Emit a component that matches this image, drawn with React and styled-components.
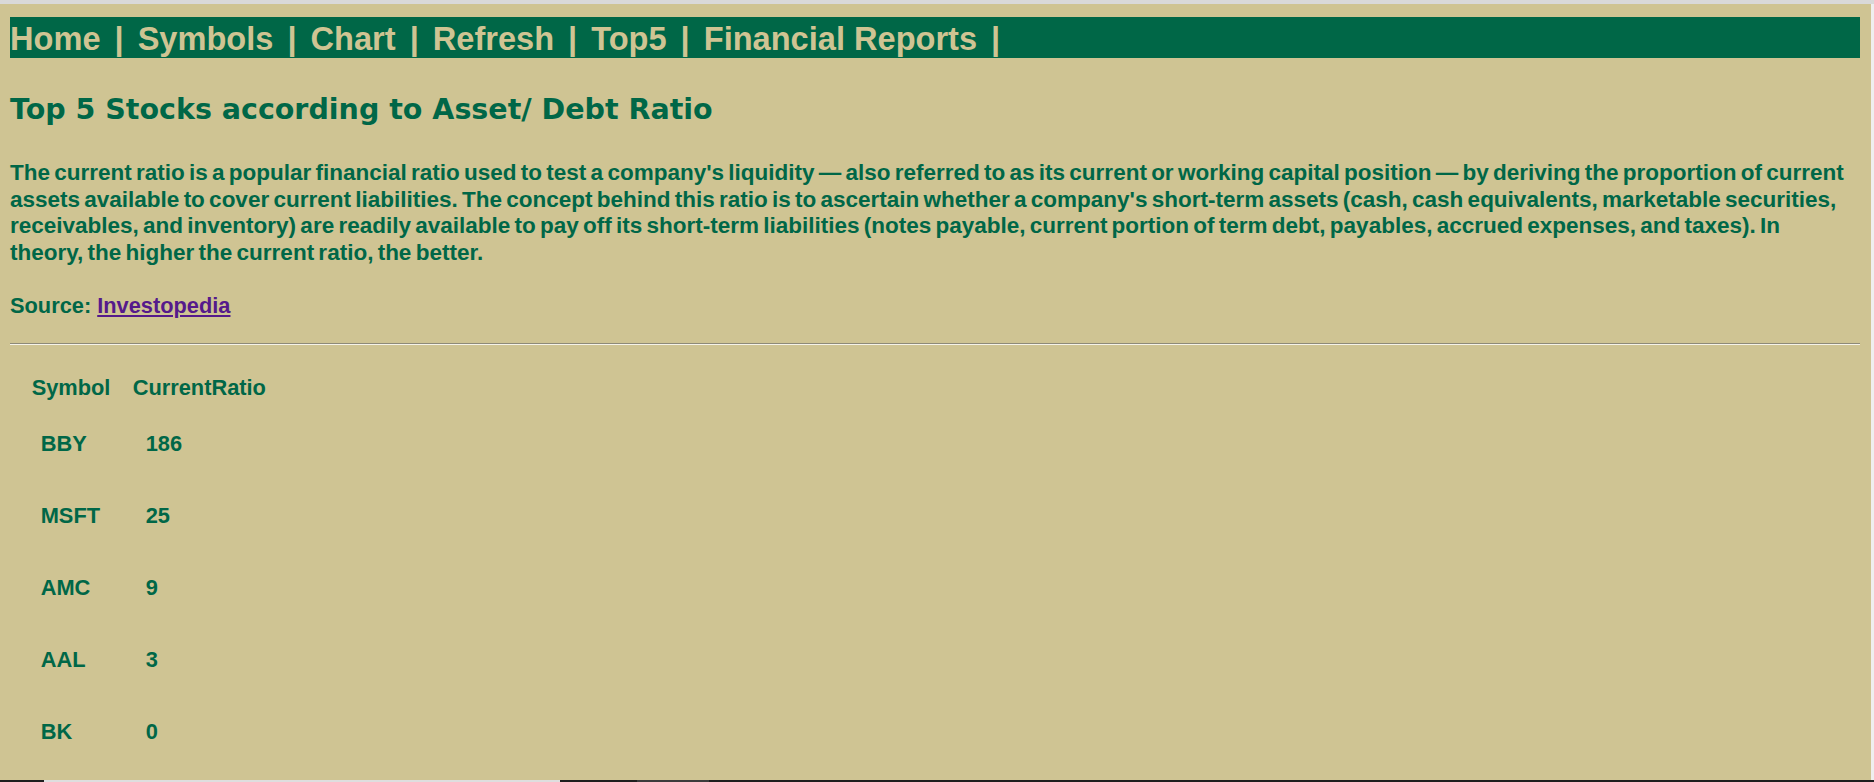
import React from "react";
import styled, { createGlobalStyle } from "styled-components";

const GREEN = "#006747";
const TAN = "#CFC493";

const GlobalStyle = createGlobalStyle`
  html, body { margin: 0; padding: 0; }
  body {
    background: ${TAN};
    font-family: "Liberation Sans", Arial, sans-serif;
    overflow: hidden;
  }
`;

const Page = styled.div`
  display: grid;
  grid-template-rows: 4px 1fr 2px;
  grid-template-columns: 1fr 3px;
  height: 100vh;
`;

const TopStrip = styled.div`
  grid-column: 1 / -1;
  background: #d9d9d9;
`;

const RightStrip = styled.div`
  background: #efefef;
`;

const BottomStrip = styled.div`
  grid-column: 1 / -1;
  display: flex;
  background: #1e1e1e;
`;

const Segment = styled.div`
  flex: 0 0 ${(p) => p.$w}px;
  background: ${(p) => p.$c};
`;

const Main = styled.main`
  background: ${TAN};
  padding: 13px 11px 0 10px;
  overflow: hidden;
  color: ${GREEN};
`;

const NavBar = styled.nav`
  display: flex;
  box-sizing: border-box;
  height: 41px;
  padding: 3px 0 1px;
  background: ${GREEN};
  font: 700 32.6px/37px "Liberation Sans", Arial, sans-serif;
  white-space: nowrap;
`;

const NavLink = styled.a`
  color: ${TAN};
  text-decoration: none;
`;

const Separator = styled.span`
  color: ${TAN};
  margin: 0 14px;
`;

const Heading = styled.h2`
  margin: 35.3px 0 0;
  font: 700 28.5px/33px "DejaVu Sans", Verdana, sans-serif;
  color: ${GREEN};
`;

const Paragraph = styled.p`
  margin: 25.8px 0 0;
  font: 700 21.8px/26.7px "Liberation Sans", Arial, sans-serif;
  color: ${GREEN};
`;

const Lead = styled(Paragraph)`
  margin: 33.6px 10px 0 0;
  font-size: 22.5px;
  word-spacing: -2px;
`;

const SourceLink = styled.a`
  color: #551a8b;
  text-decoration: underline;
`;

const Rule = styled.hr`
  margin: 23.6px 0 0;
  height: 0;
  border: 0;
  border-top: 1px solid #8e8a78;
  border-bottom: 1px solid #f6f3e8;
`;

const Table = styled.table`
  margin-top: 24px;
  border-collapse: collapse;
  border-spacing: 0;
  font: 700 21.8px/25px "Liberation Sans", Arial, sans-serif;
  color: ${GREEN};
`;

const HeadCell = styled.th`
  text-align: left;
  font-weight: 700;
  padding: 6px 0 4px ${(p) => p.$indent}px;
  width: ${(p) => (p.$w ? `${p.$w}px` : "auto")};
  box-sizing: border-box;
`;

const DataCell = styled.td`
  text-align: left;
  padding: 26.8px 0 20.4px ${(p) => p.$indent}px;
`;

const links = ["Home", "Symbols", "Chart", "Refresh", "Top5", "Financial Reports"];

const rows = [
  ["BBY", "186"],
  ["MSFT", "25"],
  ["AMC", "9"],
  ["AAL", "3"],
  ["BK", "0"],
];

export default function App() {
  return (
    <>
      <GlobalStyle />
      <Page>
        <TopStrip />
        <Main>
          <NavBar>
            {links.map((l) => (
              <React.Fragment key={l}>
                <NavLink href="#">{l}</NavLink>
                <Separator>|</Separator>
              </React.Fragment>
            ))}
          </NavBar>
          <Heading>Top 5 Stocks according to Asset/ Debt Ratio</Heading>
          <Lead>
            The current ratio is a popular financial ratio used to test a company's liquidity — also referred
            to as its current or working capital position — by deriving the proportion of current assets
            available to cover current liabilities. The concept behind this ratio is to ascertain whether a
            company's short-term assets (cash, cash equivalents, marketable securities, receivables, and
            inventory) are readily available to pay off its short-term liabilities (notes payable, current
            portion of term debt, payables, accrued expenses, and taxes). In theory, the higher the current
            ratio, the better.
          </Lead>
          <Paragraph>
            Source: <SourceLink href="#">Investopedia</SourceLink>
          </Paragraph>
          <Rule />
          <Table>
            <thead>
              <tr>
                <HeadCell $indent={21.7} $w={110}>Symbol</HeadCell>
                <HeadCell $indent={12.7}>CurrentRatio</HeadCell>
              </tr>
            </thead>
            <tbody>
              {rows.map(([s, v]) => (
                <tr key={s}>
                  <DataCell $indent={30.7}>{s}</DataCell>
                  <DataCell $indent={25.7}>{v}</DataCell>
                </tr>
              ))}
            </tbody>
          </Table>
        </Main>
        <RightStrip />
        <BottomStrip>
          <Segment $w={44} $c="#1e1e1e" />
          <Segment $w={516} $c="#dedede" />
          <Segment $w={77} $c="#1e1e1e" />
          <Segment $w={72} $c="#3c3c3c" />
        </BottomStrip>
      </Page>
    </>
  );
}
